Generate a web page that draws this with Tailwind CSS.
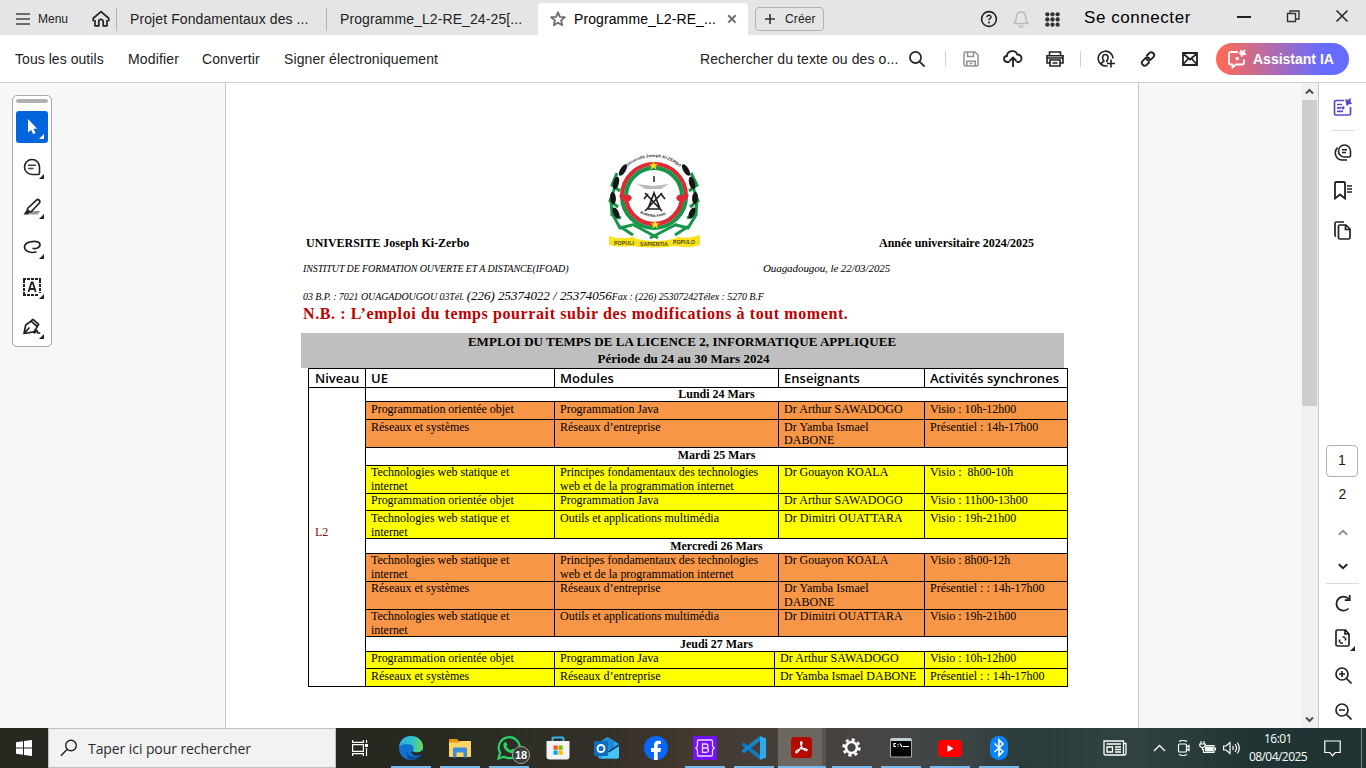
<!DOCTYPE html>
<html lang="fr">
<head>
<meta charset="utf-8">
<title>Programme_L2-RE</title>
<script src="https://cdn.jsdelivr.net/npm/@tailwindcss/browser@4"></script>
</head>
<body class="w-[1366px] h-[768px] overflow-hidden flex flex-col bg-white text-[#222] whitespace-nowrap font-['Liberation_Sans',Arial,sans-serif]">

<!-- Title bar -->
<header class="h-[35px] shrink-0 bg-[#e5e5e5] flex text-[14px] leading-[16px] tracking-[0.1px]">
  <div class="w-[116px] flex items-center pl-[16px] pt-[3px] text-[12px] tracking-normal">
    <svg class="w-[14px] h-[12px]" viewBox="0 0 14 12" stroke="#444" stroke-width="1.7"><path d="M0 1h14M0 6h14M0 11h14"/></svg>
    <span class="ml-[8px] w-[54px]">Menu</span>
    <svg class="w-[18px] h-[18px]" viewBox="0 0 18 18" fill="none" stroke="#222" stroke-width="1.7" stroke-linejoin="round"><path d="M1 8.500 9 1.600l8 6.900M1.200 8.300v3M16.800 8.300v3M3 10v5.800h3.800v-4.200a2.200 2.200 0 0 1 4.400 0v4.200H15V10"/></svg>
  </div>
  <div class="w-[210px] border-l border-[#b4b4b4] h-[23px] mt-[8px] pl-[13px] pt-[3px]">Projet Fondamentaux des ...</div>
  <div class="w-[212px] border-l border-[#b4b4b4] h-[23px] mt-[8px] pl-[13px] pt-[3px]">Programme_L2-RE_24-25[...</div>
  <div class="w-[210px] mt-[3px] rounded-t-[4px] bg-white text-black flex items-center pl-[12px]">
    <svg class="w-[16px] h-[16px]" viewBox="0 0 16 16" fill="none" stroke="#6e6e6e" stroke-width="1.8" stroke-linejoin="round"><path d="m8 1.300 1.900 4.500 4.900.4-3.700 3.200 1.100 4.800L8 11.700l-4.200 2.500 1.100-4.800L1.200 6.200l4.900-.4z"/></svg>
    <span class="ml-[8px] w-[153px]">Programme_L2-RE_...</span>
    <svg class="w-[10px] h-[10px]" viewBox="0 0 10 10" stroke="#6e6e6e" stroke-width="2"><path d="m1.200 1.200 7.400 7.400m0-7.400L1.200 8.600"/></svg>
  </div>
  <div class="ml-[7px] mt-[7px] w-[69px] h-[24px] border border-[#b1b1b1] rounded-[4px] flex items-center pl-[9px] text-[12px] tracking-[0.15px]">
    <svg class="w-[10px] h-[10px]" viewBox="0 0 10 10" stroke="#333" stroke-width="1.6"><path d="M5 0v10M0 5h10"/></svg>
    <span class="ml-[10px]">Créer</span>
  </div>
  <div class="ml-[156px] flex items-center pt-[3px]">
    <svg class="w-[18px] h-[18px]" viewBox="0 0 18 18"><circle cx="9" cy="9" r="7.4" fill="none" stroke="#222" stroke-width="1.6"/><path d="M6.900 7.300c0-2.800 4.300-2.600 4.100-.1-.1 1.300-2 1.400-2 3" fill="none" stroke="#222" stroke-width="1.500"/><circle cx="9" cy="12.600" r="1" fill="#222"/></svg>
    <svg class="ml-[15px] w-[16px] h-[18px]" viewBox="0 0 16 18" fill="none" stroke="#bcbcbc" stroke-width="1.600" stroke-linejoin="round"><path d="M1 13.500c2-2 2.400-3.500 2.400-6.500C3.400 3.500 5.300 2 8 2s4.600 1.500 4.600 5c0 3 .4 4.500 2.400 6.500zM6 15.500c.4 2 3.600 2 4 0"/></svg>
    <svg class="ml-[16px] w-[15px] h-[15px]" viewBox="0 0 16 16" fill="#333"><circle cx="2.500" cy="2.500" r="2.300"/><circle cx="8" cy="2.500" r="2.300"/><circle cx="13.500" cy="2.500" r="2.300"/><circle cx="2.500" cy="8" r="2.300"/><circle cx="8" cy="8" r="2.300"/><circle cx="13.500" cy="8" r="2.300"/><circle cx="2.500" cy="13.500" r="2.300"/><circle cx="8" cy="13.500" r="2.300"/><circle cx="13.500" cy="13.500" r="2.300"/></svg>
  </div>
  <div class="ml-[24px] w-[153px] pt-[9px] text-[17px] leading-[18px] tracking-[0.560px] text-black">Se connecter</div>
  <svg class="mt-[9px] w-[112px] h-[16px]" viewBox="0 0 112 16" fill="none" stroke="#222"><path d="M0 8h14" stroke-width="2"/><path d="M50.500 4.500h8v8h-8zM53 4V2h9v8h-3" stroke="#333" stroke-width="1.400"/><path d="m99.500 1.500 11 11m0-11-11 11" stroke-width="1.500"/></svg>
</header>

<!-- Toolbar -->
<nav class="h-[48px] shrink-0 border-b border-[#d0d0d0] bg-white flex items-center text-[14px] tracking-[0.050px] pl-[15px]">
  <span class="w-[113px] pt-[2px]">Tous les outils</span>
  <span class="w-[74px] pt-[2px] tracking-[0.150px]">Modifier</span>
  <span class="w-[82px] pt-[2px] tracking-[0.100px]">Convertir</span>
  <span class="w-[416px] pt-[2px] tracking-[0.100px]">Signer électroniquement</span>
  <span class="w-[209px] pt-[2px] tracking-[0.100px]">Rechercher du texte ou des o...</span>
  <svg class="w-[16px] h-[16px]" viewBox="0 0 16 16" fill="none" stroke="#222" stroke-width="1.700"><circle cx="6.500" cy="6.500" r="5.600"/><path d="m10.600 10.600 5 5"/></svg>
  <div class="ml-[20px] w-px h-[16px] bg-[#cfcfcf]"></div>
  <svg class="ml-[17px] w-[16px] h-[16px]" viewBox="0 0 16 16" fill="none" stroke="#929292" stroke-width="1.500"><path d="M1 2.500Q1 1 2.500 1H12l3 3v9.500q0 1.500-1.500 1.500h-11Q1 15 1 13.500zM4.500 1v4.500h6V1M3.800 15v-4.800h8.400V15"/><path d="M6.500 12.500h3"/></svg>
  <svg class="ml-[24px] w-[20px] h-[17px]" viewBox="0 0 20 17" fill="none" stroke="#222" stroke-width="1.800"><path d="M6.500 12H4.600C0 12-.1 6.300 4 6c0-5.800 9-6.600 10.200-1.500 5.600.2 5.600 7.300 1 7.500h-1.700M10 17V8M6.500 11 10 7.500l3.500 3.500"/></svg>
  <svg class="ml-[23px] w-[18px] h-[16px]" viewBox="0 0 18 16" fill="none" stroke="#222" stroke-width="1.600"><path d="M3.500 4V1h11v3M3.500 12H1V4.800h16V12h-2.500M1 7h16M4 9h10v6H4zM6.500 12h5"/></svg>
  <div class="ml-[16px] w-px h-[16px] bg-[#cfcfcf]"></div>
  <svg class="ml-[16px] w-[18px] h-[18px]" viewBox="0 0 18 18" fill="none" stroke="#222" stroke-width="1.600"><path d="M10.500 15.700A7.400 7.400 0 1 1 16 8.500M4 14c.5-2 2.700-2 3-3-2.500-2.500-1.500-6.500 1.300-6.500s4 4 1.300 6.300c0 .6.400.9 1 1.200M14 9.500v8M10 13.500h8"/></svg>
  <svg class="ml-[25px] w-[16px] h-[16px]" viewBox="0 0 16 16" fill="none" stroke="#222" stroke-width="1.900" stroke-linecap="round"><path d="m7 4.500 2.300-2.300c2.600-2.600 6.600 1.300 4 4L10.800 8.700c-1.200 1.200-3 1.100-4-.1M9 11.500l-2.300 2.300c-2.600 2.600-6.600-1.300-4-4l2.500-2.500c1.200-1.200 3-1.100 4 .1"/></svg>
  <svg class="ml-[26px] w-[16px] h-[14px]" viewBox="0 0 16 14" fill="none" stroke="#222" stroke-width="1.800"><path d="M1 1h14v12H1zM1 1.500l7 6 7-6M1 12.500l5-5.500m9 5.500L10 7"/></svg>
  <div class="ml-[18px] w-[133px] h-[32px] rounded-full bg-[linear-gradient(90deg,#ff6a55_2%,#666cff_80%)] flex items-center pl-[12px] text-white font-bold text-[14px] tracking-[0px]">
    <svg class="w-[19px] h-[20px]" viewBox="0 0 19 20" fill="none" stroke="#fff" stroke-width="1.800" stroke-linejoin="round"><path d="M10 3H3Q1 3 1 5v8.500q0 2 2 2h1.500V18.500l3.500-3h6q2 0 2-2V10.500"/><path d="m12.500 1 2 1.300L17 .8l-.6 2.700 1.600 2-2.600.2L13.500 8l-.7-2.600-2-1.200 2.200-1z" fill="#fff" stroke-width=".7"/><circle cx="9.200" cy="9.500" r="1.700" fill="#fff" stroke="none"/></svg>
    <span class="ml-[6px] pt-px">Assistant IA</span>
  </div>
</nav>

<!-- Viewer -->
<main class="h-[645px] shrink-0 flex bg-[#f7f7f7]">
  <aside class="w-[225px] pt-[12px] pl-[12px]">
    <div class="w-[40px] h-[252px] border border-[#aaa] rounded-[5px] bg-white flex flex-col items-center pt-[3px]">
      <div class="w-[32px] h-[4px] rounded-full bg-[#b1b1b1]"></div>
      <div class="mt-[8px] w-[32px] h-[32px] rounded-[3px] bg-[#0265dc]">
        <svg class="w-[32px] h-[32px]" viewBox="0 0 32 32" fill="#fff"><path d="M12 8v13.500l3-2.800 2.200 4.500 2.300-1.200-2-4.300H21.200zM28 23v5h-5z"/></svg>
      </div>
      <svg class="mt-[8px] w-[32px] h-[32px]" viewBox="0 0 32 32" fill="none" stroke="#222" stroke-width="1.600"><path d="M16 8.500a7.500 7.500 0 1 0 0 15h6q1.500 0 1.500-1.500v-6A7.500 7.500 0 0 0 16 8.500z"/><path d="M12 14.300h8M12 17.500h5.500" stroke="#444"/><path d="M28 23v5h-5z" fill="#222" stroke="none"/></svg>
      <svg class="mt-[8px] w-[32px] h-[32px]" viewBox="0 0 32 32" fill="none" stroke="#222" stroke-width="1.700"><path d="M13.500 20h11l-3 3.500h-8z" fill="#999" stroke="none"/><path d="m11.500 17.500 8.600-8.200c2.200-2 5 .7 3 3l-8 8.500c-2 .4-4-1.500-3.600-3.300z"/><path d="m11 18.500 3 3.200-2 1.800H7.500z" fill="#222" stroke="none"/><path d="M28 23v5h-5z" fill="#222" stroke="none"/></svg>
      <svg class="mt-[8px] w-[32px] h-[32px]" viewBox="0 0 32 32" fill="none" stroke="#222" stroke-width="1.700"><path d="M20.500 20.800c-5 1.800-12-.3-12-4.800 0-6.200 15.500-7.500 15.500-2.500 0 3.500-4.500 4.600-7.500 3.800"/><path d="M28 23v5h-5z" fill="#222" stroke="none"/></svg>
      <svg class="mt-[8px] w-[32px] h-[32px]" viewBox="0 0 32 32" fill="none" stroke="#222"><path d="M7 8h18M7 24h15" stroke-width="2" stroke-dasharray="3 1"/><path d="M8 9v16M24 9v13" stroke-width="2" stroke-dasharray="3 1"/><path d="m12.500 21 3-9.500h1.200l3 9.500M13.800 18h5" stroke-width="1.800"/><path d="M28 23v5h-5z" fill="#222" stroke="none"/></svg>
      <svg class="mt-[8px] w-[32px] h-[32px]" viewBox="0 0 32 32" fill="none" stroke="#222" stroke-width="1.700" stroke-linejoin="round"><path d="m8 22.500 1.700-8.500 5.300-3.800 6.300 5.300-3.300 5.300zl5.500-6M15 10l2-1.700 5.700 5-1.400 2.200M18 22.500l3-3 .8 2.500h2.500"/><path d="M28 23v5h-5z" fill="#222" stroke="none"/></svg>
    </div>
  </aside>

  <!-- PDF page -->
  <article class="w-[914px] border-x border-[#c8c8c8] bg-white text-black font-['Liberation_Serif','Times_New_Roman',serif]">
    <div class="h-[167px] flex items-end pl-[80px] text-[12px] font-bold leading-[14px]">
      <span class="w-[302px] tracking-[-0.030px]">UNIVERSITE Joseph Ki-Zerbo</span>
      <svg class="w-[94px] h-[96px] mb-px" viewBox="0 0 94 96">
        <g fill="none" stroke="#16964a" stroke-width="3"><path d="m9 20-5 12 8 6M7 34l-5 14 8 6M3 46l1 16 9 3M5 62l7 13 12-3M11 73l14 9M24 71l26 14M83 20l6 12-8 6M85 34l5 14-8 6M89 46l-1 16-9 3M88 62l-8 13-12-3M81 73l-14 9M69 71 42 85" /></g>
        <g fill="#151515"><ellipse cx="15" cy="17" rx="2.700" ry="6.500" transform="rotate(32 15 17)"/><ellipse cx="8" cy="30" rx="2.900" ry="6.500" transform="rotate(15 8 30)"/><ellipse cx="5" cy="45" rx="2.900" ry="6" transform="rotate(-5 5 45)"/><ellipse cx="8" cy="60" rx="2.800" ry="6" transform="rotate(-25 8 60)"/><ellipse cx="78" cy="17" rx="2.700" ry="6.500" transform="rotate(-32 78 17)"/><ellipse cx="84" cy="30" rx="2.900" ry="6.500" transform="rotate(-15 84 30)"/><ellipse cx="87" cy="45" rx="2.900" ry="6" transform="rotate(5 87 45)"/><ellipse cx="84" cy="60" rx="2.800" ry="6" transform="rotate(25 84 60)"/></g>
        <circle cx="46" cy="43" r="33" fill="#fff"/>
        <g fill="none" stroke-width="4.200"><path d="M14 43a32 32 0 0 1 64 0" stroke="#df2935"/><path d="M18 43a28 28 0 0 1 56 0" stroke="#16964a"/><path d="M14 43a32 32 0 0 0 64 0" stroke="#16964a"/><path d="M18 43a28 28 0 0 0 56 0" stroke="#df2935"/></g>
        <path d="M11 42h11l2 3-2 3H14zM81 42H70l-2 3 2 3h8z" fill="#df2935"/>
        <path d="m45.500 8 1.200 3.200h3.400l-2.700 2 1 3.300-2.900-2-2.900 2 1-3.300-2.700-2h3.400zM47 67l1.200 3.200h3.400l-2.700 2 1 3.300-2.900-2-2.900 2 1-3.300-2.700-2h3.400z" fill="#ffe21c"/>
        <path d="m29 31 16 2 16-2-8 5H37z" fill="#bbb"/><path d="M46 23v6" stroke="#222" stroke-width="1.500"/>
        <path d="m37 40 17 18M54 40 37 58M46 40l-6 16h12zM36 46l4-5M57 46l-4-5" stroke="#222" stroke-width="1.700" fill="none"/>
        <path id="arcTop" d="M19 14a39.500 39.500 0 0 1 60 9" fill="none"/><text font-size="4.200" font-family="Liberation Sans" font-weight="700" fill="#333"><textPath href="#arcTop">Université Joseph KI-ZERBO</textPath></text>
        <path id="arcIn" d="M32 60q14 8 29 0" fill="none"/><text font-size="3.600" font-family="Liberation Sans" font-weight="700" fill="#222"><textPath href="#arcIn">BURKINA FASO</textPath></text>
        <path d="M1 83q11 4 24 1l4 2q18 4 36 0l5-2q11 2 22-2v10q-12 4-24 1-24 3-44 0-12 2-23-1z" fill="#f7e11c"/>
        <g font-size="5.200" font-family="Liberation Sans" font-weight="700" fill="#54480a"><text x="6" y="92" textLength="20">POPULI</text><text x="32" y="93" textLength="28">SAPIENTIA</text><text x="65" y="91" textLength="22">POPULO</text></g>
      </svg>
      <span class="ml-[177px]">Année universitaire 2024/2025</span>
    </div>
    <div class="h-[26px] flex items-end pl-[77px] italic leading-[14px]">
      <span class="w-[460px] text-[10px] tracking-[-0.110px]">INSTITUT DE FORMATION OUVERTE ET A DISTANCE(IFOAD)</span>
      <span class="text-[11px] tracking-[-0.080px] pb-px">Ouagadougou, le 22/03/2025</span>
    </div>
    <div class="h-[28px] flex items-end pl-[77px] italic leading-[14px] text-[10px] tracking-[-0.090px]">
      <div>03 B.P. : 7021 OUAGADOUGOU 03Tél. <span class="text-[13px] tracking-[-0.020px]">(226) 25374022 / 25374056</span>Fax : (226) 25307242Télex : 5270 B.F</div>
    </div>
    <div class="h-[29px] pt-px pl-[77px] text-[16px] leading-[18px] font-bold text-[#c00000] tracking-[0.600px]">N.B. : L’emploi du temps pourrait subir des modifications à tout moment.</div>
    <div class="ml-[75px] w-[763px] h-[35px] bg-[#bfbfbf] text-center text-[13px] leading-[17px] font-bold">
      <div class="tracking-[0.040px] pr-px">EMPLOI DU TEMPS DE LA LICENCE 2, INFORMATIQUE APPLIQUEE</div>
      <div class="pl-[2px]">Période du 24 au 30 Mars 2024</div>
    </div>

    <!-- Timetable -->
    <div class="ml-[82px] w-[760px] border border-t-0 border-black text-[12px] leading-[14px] tracking-[-0.020px]">
      <div class="h-[19px] border-t border-black flex font-semibold text-[13px] leading-[19px] font-['Open_Sans',sans-serif] tracking-[0.020px]">
        <div class="w-[56px] pl-[6px]">Niveau</div>
        <div class="w-[189px] border-l border-black pl-[5px]">UE</div>
        <div class="w-[224px] border-l border-black pl-[5px]">Modules</div>
        <div class="w-[146px] border-l border-black pl-[5px]">Enseignants</div>
        <div class="border-l border-black pl-[5px]">Activités synchrones</div>
      </div>
      <div class="flex h-[299px] border-t border-black">
        <div class="w-[56px] pl-[6px] pt-[137px] text-[#7b1010]">L2</div>
        <div class="w-[702px] border-l border-black">
          <div class="h-[13px] text-center font-bold leading-[13px]">Lundi 24 Mars</div>
          <div class="h-[18px] border-t border-black bg-[#f79646] flex">
            <div class="w-[188px] pl-[5px]">Programmation orientée objet</div><div class="w-[224px] border-l border-black pl-[5px]">Programmation Java</div><div class="w-[146px] border-l border-black pl-[5px] tracking-[0.060px]">Dr Arthur SAWADOGO</div><div class="border-l border-black pl-[5px]">Visio : 10h-12h00</div>
          </div>
          <div class="h-[28px] border-t border-black bg-[#f79646] flex leading-[13px] pt-px">
            <div class="w-[188px] pl-[5px]">Réseaux et systèmes</div><div class="w-[224px] border-l border-black pl-[5px] -mt-px pt-px">Réseaux d’entreprise</div><div class="w-[146px] border-l border-black pl-[5px] -mt-px pt-px tracking-[0.060px]">Dr Yamba Ismael<br>DABONE</div><div class="border-l border-black pl-[5px] -mt-px pt-px">Présentiel : 14h-17h00</div>
          </div>
          <div class="h-[18px] border-t border-black text-center font-bold">Mardi 25 Mars</div>
          <div class="h-[28px] border-t border-black bg-[#ff0] flex [&>div]:-mt-px">
            <div class="w-[188px] pl-[5px]">Technologies web statique et<br>internet</div><div class="w-[224px] border-l border-black pl-[5px]">Principes fondamentaux des technologies<br>web et de la programmation internet</div><div class="w-[146px] border-l border-black pl-[5px]">Dr Gouayon KOALA</div><div class="border-l border-black pl-[5px]">Visio :&nbsp; 8h00-10h</div>
          </div>
          <div class="h-[17px] border-t border-black bg-[#ff0] flex [&>div]:-mt-px">
            <div class="w-[188px] pl-[5px]">Programmation orientée objet</div><div class="w-[224px] border-l border-black pl-[5px]">Programmation Java</div><div class="w-[146px] border-l border-black pl-[5px] tracking-[0.060px]">Dr Arthur SAWADOGO</div><div class="border-l border-black pl-[5px]">Visio : 11h00-13h00</div>
          </div>
          <div class="h-[28px] border-t border-black bg-[#ff0] flex">
            <div class="w-[188px] pl-[5px]">Technologies web statique et<br>internet</div><div class="w-[224px] border-l border-black pl-[5px]">Outils et applications multimédia</div><div class="w-[146px] border-l border-black pl-[5px] tracking-[0.060px]">Dr Dimitri OUATTARA</div><div class="border-l border-black pl-[5px]">Visio : 19h-21h00</div>
          </div>
          <div class="h-[15px] border-t border-black text-center font-bold">Mercredi 26 Mars</div>
          <div class="h-[28px] border-t border-black bg-[#f79646] flex [&>div]:-mt-px">
            <div class="w-[188px] pl-[5px]">Technologies web statique et<br>internet</div><div class="w-[224px] border-l border-black pl-[5px]">Principes fondamentaux des technologies<br>web et de la programmation internet</div><div class="w-[146px] border-l border-black pl-[5px]">Dr Gouayon KOALA</div><div class="border-l border-black pl-[5px]">Visio : 8h00-12h</div>
          </div>
          <div class="h-[28px] border-t border-black bg-[#f79646] flex [&>div]:-mt-px">
            <div class="w-[188px] pl-[5px]">Réseaux et systèmes</div><div class="w-[224px] border-l border-black pl-[5px]">Réseaux d’entreprise</div><div class="w-[146px] border-l border-black pl-[5px] tracking-[0.060px]">Dr Yamba Ismael<br>DABONE</div><div class="border-l border-black pl-[5px]">Présentiel : : 14h-17h00</div>
          </div>
          <div class="h-[27px] border-t border-black bg-[#f79646] flex [&>div]:-mt-px">
            <div class="w-[188px] pl-[5px]">Technologies web statique et<br>internet</div><div class="w-[224px] border-l border-black pl-[5px]">Outils et applications multimédia</div><div class="w-[146px] border-l border-black pl-[5px] tracking-[0.060px]">Dr Dimitri OUATTARA</div><div class="border-l border-black pl-[5px]">Visio : 19h-21h00</div>
          </div>
          <div class="h-[15px] border-t border-black text-center font-bold">Jeudi 27 Mars</div>
          <div class="h-[17px] border-t border-black bg-[#ff0] flex [&>div]:-mt-px">
            <div class="w-[188px] pl-[5px]">Programmation orientée objet</div><div class="w-[220px] border-l border-black pl-[5px]">Programmation Java</div><div class="w-[150px] border-l border-black pl-[5px] tracking-[0.060px]">Dr Arthur SAWADOGO</div><div class="border-l border-black pl-[5px]">Visio : 10h-12h00</div>
          </div>
          <div class="h-[18px] border-t border-black bg-[#ff0] flex">
            <div class="w-[188px] pl-[5px]">Réseaux et systèmes</div><div class="w-[220px] border-l border-black pl-[5px]">Réseaux d’entreprise</div><div class="w-[150px] border-l border-black pl-[5px]">Dr Yamba Ismael DABONE</div><div class="border-l border-black pl-[5px]">Présentiel : : 14h-17h00</div>
          </div>
        </div>
      </div>
    </div>
  </article>

  <div class="w-[163px]"></div>
  <!-- Scrollbar -->
  <div class="w-[16px] bg-[#f0f0f0] flex flex-col items-start justify-between">
    <svg class="w-[15px] h-[17px]" viewBox="0 0 15 17" fill="none" stroke="#505050" stroke-width="2"><path d="m4 10.500 3.500-3.500 3.500 3.500"/></svg>
    <div class="w-[15px] h-[306px] bg-[#cdcdcd] mb-auto"></div>
    <svg class="w-[15px] h-[17px]" viewBox="0 0 15 17" fill="none" stroke="#505050" stroke-width="2"><path d="m4 6.500 3.500 3.500L11 6.500"/></svg>
  </div>

  <!-- Right rail -->
  <aside class="w-[48px] border-l border-[#c8c8c8] bg-white flex flex-col items-center text-[14px] leading-[16px]">
    <svg class="mt-[15px] w-[20px] h-[18px] shrink-0" viewBox="0 0 20 18" fill="none" stroke="#5848d0" stroke-width="1.700"><path d="M11 2.500H3Q1.500 2.500 1.500 4v11.500Q1.500 17 3 17h13q1.500 0 1.500-1.500V9"/><path d="M4 6.500h5M4 9.800h4M4 13.300h6" /><circle cx="10" cy="9.800" r="1.600" fill="#5848d0" stroke="none"/><path d="m12 1 2.500 1L18 0l-.5 3L19 6l-3 .3L13.500 8 13 5z" fill="#5848d0" stroke="none"/></svg>
    <div class="mt-[14px] w-[23px] h-px bg-[#dcdcdc] shrink-0"></div>
    <svg class="mt-[13px] w-[18px] h-[17px] shrink-0" viewBox="0 0 18 17" fill="none" stroke="#222" stroke-width="1.600"><path d="M10.500 1a6 6 0 1 0 0 12H15q1.500 0 1.500-1.500V7a6 6 0 0 0-6-6zM8 5.700h5M8 8.500h4M3.500 3.500C-1 8.500 2 16.200 8.500 16H13"/></svg>
    <svg class="mt-[20px] w-[18px] h-[19px] shrink-0" viewBox="0 0 18 19" fill="none" stroke="#222" stroke-width="1.800"><path d="M1 2Q1 1 2 1h8q1 0 1 1v15.500l-5-4-5 4z"/><path d="M13 5h5M13 8h5M13 11h5" stroke-width="1.500"/></svg>
    <svg class="mt-[21px] w-[17px] h-[19px] shrink-0" viewBox="0 0 17 19" fill="none" stroke="#222" stroke-width="1.700"><path d="M2 15.500Q1 15 1 14V2.500Q1 1 2.500 1H10M4.500 5.500Q4.500 4 6 4h6l4 4v8.500q0 1.500-1.500 1.500H6q-1.500 0-1.500-1.500zM11.500 4.500V8.500H16"/></svg>
    <div class="mt-[205px] ml-[-1px] w-[32px] h-[32px] shrink-0 border border-[#b1b1b1] rounded-[4px] text-center pt-[6px]">1</div>
    <div class="mt-[9px]">2</div>
    <svg class="mt-[27px] w-[10px] h-[7px] shrink-0" viewBox="0 0 10 7" fill="none" stroke="#909090" stroke-width="2"><path d="m.8 5.800 4.200-4 4.200 4"/></svg>
    <svg class="mt-[27px] w-[10px] h-[7px] shrink-0" viewBox="0 0 10 7" fill="none" stroke="#222" stroke-width="2"><path d="m.8 1.200 4.200 4 4.200-4"/></svg>
    <div class="mt-[13px] w-[33px] h-px bg-[#dcdcdc] shrink-0"></div>
    <svg class="mt-[11px] w-[18px] h-[17px] shrink-0" viewBox="0 0 18 17" fill="none" stroke="#222" stroke-width="1.800"><path d="M14.500 13.500a7 7 0 1 1 .2-9.500M15.700 0v5.200h-5"/></svg>
    <svg class="mt-[17px] ml-[5px] w-[20px] h-[22px] shrink-0" viewBox="0 0 20 22" fill="none" stroke="#222" stroke-width="1.700"><path d="M1 2.500Q1 1 2.500 1h8L14 5v10.500q0 1.500-1.500 1.500h-10Q1 17 1 15.500zM10 1v4h4"/><path d="M4.500 10.500v3.500H8M10.500 11.500V8H7.500" stroke-dasharray="3 1"/><path d="M20 17v5h-5z" fill="#222" stroke="none"/></svg>
    <svg class="mt-[16px] ml-[2px] w-[17px] h-[17px] shrink-0" viewBox="0 0 17 17" fill="none" stroke="#222" stroke-width="1.700"><circle cx="7" cy="7" r="6"/><path d="m11.500 11.500 5 5M7 4v6M4 7h6"/></svg>
    <svg class="mt-[19px] ml-[2px] w-[17px] h-[17px] shrink-0" viewBox="0 0 17 17" fill="none" stroke="#222" stroke-width="1.700"><circle cx="7" cy="7" r="6"/><path d="m11.500 11.500 5 5M4 7h6"/></svg>
  </aside>
</main>

<!-- Taskbar -->
<footer class="h-[40px] shrink-0 flex text-white bg-[linear-gradient(90deg,#25291f_0,#26291f_400px,#33302a_600px,#43392f_690px,#46413c_800px,#474646_900px,#3b4444_970px,#2a3d3c_1020px,#304340_1130px,#203533_1250px,#203533)]">
  <div class="w-[48px] flex items-center justify-center"><svg class="w-[16px] h-[16px]" viewBox="0 0 16 16" fill="#fff"><path d="M0 2.200 7 1.200V7.500H0zM8 1l8-1v7.500H8zM0 8.500h7v6.300l-7-1zM8 8.500h8V16l-8-1z"/></svg></div>
  <div class="w-[288px] bg-[#f2f2f2] border border-[#bfbfbf] flex items-center pl-[11px] text-[#2b2b2b] font-['Open_Sans',sans-serif] text-[14px] tracking-[-0.080px]">
    <svg class="w-[18px] h-[18px]" viewBox="0 0 18 18" fill="none" stroke="#222" stroke-width="1.400"><circle cx="11" cy="6.500" r="5.300"/><path d="M7.300 10.300.8 16.800"/></svg>
    <span class="ml-[10px]">Taper ici pour rechercher</span>
  </div>
  <div class="w-[50px] flex items-center pl-[16px]"><svg class="w-[16px] h-[16px]" viewBox="0 0 16 16" fill="none" stroke="#fff" stroke-width="1.200"><path d="M.6 0v2.400h10.800V0M.6 4.600h10.800v6.800H.6zM.6 16v-2.400h10.800V16M14.500 0v3M14.500 8v8"/><path d="M13 4h3v3h-3z" fill="#fff" stroke="none"/></svg></div>

  <div class="w-[49px] flex flex-col items-center pt-[8px] justify-between"><svg class="w-[24px] h-[24px]" viewBox="0 0 24 24"><defs><linearGradient id="eg" x1="0" x2="1"><stop offset="0" stop-color="#2ba9e8"/><stop offset=".6" stop-color="#35c5c0"/><stop offset="1" stop-color="#6bdc50"/></linearGradient></defs><circle cx="12" cy="12" r="12" fill="#1173cf"/><path d="M.2 10.500C1 4 6 0 12 0c7 0 12 5 12 10.500 0 4-3 6-6.300 6-3 0-4.200-1-3.700-2 1.500-2.500.3-5.500-3-6C7 8 2 8 .2 10.500z" fill="url(#eg)"/><path d="M9 10c-3 3-1.500 9 4 10.500 3.500 1 7 .2 9.300-2.200C20 22 16.500 24 12.500 24 7 24 6 14 9 10z" fill="#0c4f9c"/><path d="M14 14.500c-.5 1 .7 2 3.700 2 2 0 3.600-.6 4.700-1.700l1.600.2-1.700 3.300c-3 2.200-8.500 1.800-10.500-2.300 1 .2 1.700-.5 2.200-1.500z" fill="#26291f"/></svg><div class="w-[40px] h-[2px] bg-[#76b9ed]"></div></div>
  <div class="w-[49px] flex flex-col items-center pt-[8px] justify-between"><svg class="w-[22px] h-[24px]" viewBox="0 0 22 24"><path d="M0 3h8l2 2v3H0z" fill="#e39a12"/><path d="M0 6.500h9.500L11 5h11v16H0z" fill="#ffd567"/><path d="M4 21.500v-8.700q0-1.300 1.300-1.300h11.400q1.300 0 1.300 1.300v8.700h-3.500v-5h-7v5z" fill="#3a8fdc"/></svg><div class="w-[40px] h-[2px] bg-[#76b9ed]"></div></div>
  <div class="w-[49px] flex flex-col items-center pt-[8px] justify-between relative"><svg class="w-[24px] h-[24px]" viewBox="0 0 24 24"><path d="m1.500 22.500 1.600-5.700a10.500 10.500 0 1 1 4 4z" fill="none" stroke="#25d366" stroke-width="2.200"/><path d="M7 7c1.500-2 2.400-.8 3.400 1.800l-1 1.500c1 2 2.300 3 4.300 4l1.300-1.500c3 1.200 3.300 1.500 2.500 3-1.300 2.300-4.500 1.700-7.300-.2S5.300 10 7 7z" fill="#25d366"/></svg><div class="absolute left-[28px] top-[18px] w-[18px] h-[18px] rounded-full border border-[#a5a5a5] bg-[#3a3b37] text-center text-[11px] leading-[16px] font-bold">18</div><div class="w-[40px] h-[2px] bg-[#76b9ed]"></div></div>
  <div class="w-[49px] flex justify-center pt-[8px]"><svg class="w-[24px] h-[24px]" viewBox="0 0 24 24"><path d="M6.500 6V2.500Q6.500 1.500 7.500 1.500h9q1 0 1 1V6" fill="none" stroke="#35b4e8" stroke-width="2"/><path d="M.5 5h23v15.500q0 3-3 3h-17q-3 0-3-3z" fill="#f3f3f3"/><path d="M7.500 9.500h4.200v4.200H7.500z" fill="#f25022"/><path d="M12.500 9.500h4.200v4.200h-4.200z" fill="#7fba00"/><path d="M7.500 14.500h4.200v4.200H7.500z" fill="#00a4ef"/><path d="M12.500 14.500h4.200v4.200h-4.200z" fill="#ffb900"/></svg></div>
  <div class="w-[49px] flex justify-center pt-[8px]"><svg class="w-[25px] h-[24px]" viewBox="0 0 25 24"><path d="M4 7 13.500 1 25 8v12.500q0 2-2 2H6q-2 0-2-2z" fill="#28a8ea"/><path d="m8 5 6-3 6 3v8H8z" fill="#1b8ad8"/><path d="m14 15 11-7v4l-9 6z" fill="#123b6d"/><path d="m25 10-19 12.500h17q2 0 2-2z" fill="#45c5f5"/><rect y="5" width="14" height="15" rx="1.500" fill="#0f6cbd"/><circle cx="7" cy="12.500" r="3.500" fill="none" stroke="#fff" stroke-width="1.900"/></svg></div>
  <div class="w-[49px] flex justify-center pt-[8px]"><svg class="w-[24px] h-[24px]" viewBox="0 0 24 24"><circle cx="12" cy="12" r="12" fill="#0866ff"/><path d="M10 24v-8H7v-4h3V9.500C10 6 12 4 17 4.900V8c-3 0-3.300.5-3.300 2v2H17l-.6 4h-2.700v8z" fill="#fff"/></svg></div>
  <div class="w-[49px] flex flex-col items-center pt-[8px] justify-between"><svg class="w-[24px] h-[24px]" viewBox="0 0 24 24"><path d="M0 0h24v24H0z" fill="#7411f5"/><path d="M5.500 4h13q1 0 1 1v4q0 2.500 2 3-2 .5-2 3v4q0 1-1 1h-13q-1 0-1-1v-4q0-2.500-2-3 2-.5 2-3V5q0-1 1-1zM9.500 8h3.300c3 0 3 3.700.2 3.900 3.400.2 3.300 4.400-.3 4.400H9.500zM9.500 12H13" fill="none" stroke="#eadcff" stroke-width="1.300"/></svg><div class="w-[40px] h-[2px] bg-[#76b9ed]"></div></div>
  <div class="w-[49px] flex flex-col items-center pt-[8px] justify-between"><svg class="w-[24px] h-[24px]" viewBox="0 0 24 24"><path d="m0 8 2-1.600 16 12.300V24L0 9.500z" fill="#0d78bd"/><path d="m0 15.500 2 1.800L18 5V0L0 14z" fill="#1684cc"/><path d="m18 0 6 2.500v19L18 24z" fill="#2fa8ee"/></svg><div class="w-[40px] h-[2px] bg-[#76b9ed]"></div></div>
  <div class="w-[49px] flex flex-col"><div class="w-[48px] flex-1 border-r-4 border-[#5a5550] bg-[#6d6761] pl-[13px] pt-[9px]"><svg class="w-[21px] h-[21px]" viewBox="0 0 21 21"><rect width="21" height="21" rx="3.500" fill="#b30b00"/><path d="M4.800 15.600c-1-1.600 3-3.800 7.500-3.900 4-.1 5 1.800 3 1.900-2.500.1-5.800-4-5.700-7.600 0-2 1.700-1.600 1.400.5-.5 3.500-4.500 10.500-6.200 9.100z" fill="none" stroke="#fff" stroke-width="1.200"/></svg></div><div class="w-[48px] h-[2px] bg-[#76b9ed]"></div></div>
  <div class="w-[49px] flex flex-col items-center pt-[10px] justify-between"><svg class="w-[19px] h-[19px]" viewBox="0 0 19 19" fill="none" stroke="#fff"><circle cx="9.500" cy="9.500" r="5.500" stroke-width="2.600"/><circle cx="9.500" cy="9.500" r="7.900" stroke-width="2.600" stroke-dasharray="3.100 3.100"/></svg><div class="w-[40px] h-[2px] bg-[#76b9ed]"></div></div>
  <div class="w-[49px] flex flex-col items-center pt-[10px] justify-between"><svg class="w-[22px] h-[20px]" viewBox="0 0 22 20"><path d="M.5 1h21v18H.5z" fill="#050505" stroke="#aaa"/><path d="M1 0h20v3H1z" fill="#c3cbd3"/><g stroke="#fff" stroke-width="1.200"><path d="M6 5.500H4v3h2M8 6v.8M8 7.700v.8M10 5.500l2 3.500M13 8.500h6" fill="none"/></g></svg><div class="w-[40px] h-[2px] bg-[#76b9ed]"></div></div>
  <div class="w-[49px] flex flex-col items-center pt-[12px] justify-between"><svg class="w-[24px] h-[17px]" viewBox="0 0 24 17"><rect width="24" height="17" rx="4" fill="#f00"/><path d="m9.500 5 6 3.500-6 3.500z" fill="#fff"/></svg><div class="w-[40px] h-[2px] bg-[#76b9ed]"></div></div>
  <div class="w-[49px] flex flex-col items-center pt-[8px] justify-between"><svg class="w-[18px] h-[24px]" viewBox="0 0 18 24"><rect width="18" height="24" rx="8.500" fill="#0a84f5"/><path d="m4.500 7.500 8.500 8-4 4V4l4 4-8.500 8" fill="none" stroke="#fff" stroke-width="1.600"/></svg><div class="w-[40px] h-[2px] bg-[#76b9ed]"></div></div>

  <div class="ml-[80px] flex items-center">
    <svg class="w-[24px] h-[16px]" viewBox="0 0 24 16" fill="none" stroke="#fff" stroke-width="1.300"><path d="M1 1h19.500v14H2.500Q1 15 1 13.500zM20.500 3.500H23v10q0 1.500-1.500 1.500H20M3.500 4h14.500M12 7h6M12 9.500h6M12 12h6M4 7h5.500v5H4z"/></svg>
    <svg class="ml-[26px] w-[13px] h-[8px]" viewBox="0 0 13 8" fill="none" stroke="#fff" stroke-width="1.300"><path d="m1 7 5.500-5.500L12 7"/></svg>
    <svg class="ml-[11px] w-[13px] h-[16px]" viewBox="0 0 13 16" fill="none" stroke="#fff" stroke-width="1.200"><path d="M2 1.500q4-2 8 0M2 14.500q4 2 8 0M2.500 4h6q1 0 1 1v6q0 1-1 1h-6q-1 0-1-1V5q0-1 1-1zM9.500 7l2.500-1.500v5L9.500 9"/></svg>
    <svg class="ml-[9px] w-[17px] h-[14px]" viewBox="0 0 17 14" fill="none" stroke="#fff" stroke-width="1.200"><path d="M6 4.500h9v7H4.500V8M16.500 6.500v3M2 0v3M5 0v3M.8 3h5.400v2L4.500 6.500h-2L.8 5zM3.500 6.500V9"/><path d="M6.500 6h7v4h-7z" fill="#fff"/></svg>
    <svg class="ml-[7px] w-[17px] h-[14px]" viewBox="0 0 17 14" fill="none" stroke="#fff" stroke-width="1.200"><path d="M.6 5v4H3l4 3.500v-11L3 5zM9.500 5q1.500 2 0 4M12 3q3 4 0 8M14.300 1.500q4 5.500 0 11"/></svg>
    <div class="ml-[8px] w-[60px] text-center font-['Open_Sans',sans-serif] text-[12px] leading-[18px] tracking-[-0.550px] pb-px"><div>16:01</div><div class="tracking-[-0.550px]">08/04/2025</div></div>
    <svg class="ml-[16px] w-[17px] h-[17px]" viewBox="0 0 17 17" fill="none" stroke="#fff" stroke-width="1.200"><path d="M.8 1h15.400v11.500h-5L8.500 15.700l-2.700-3.200h-5z"/></svg>
    <div class="ml-[20px] w-px h-[40px] bg-[#72807e]"></div>
  </div>
</footer>
</body>
</html>
